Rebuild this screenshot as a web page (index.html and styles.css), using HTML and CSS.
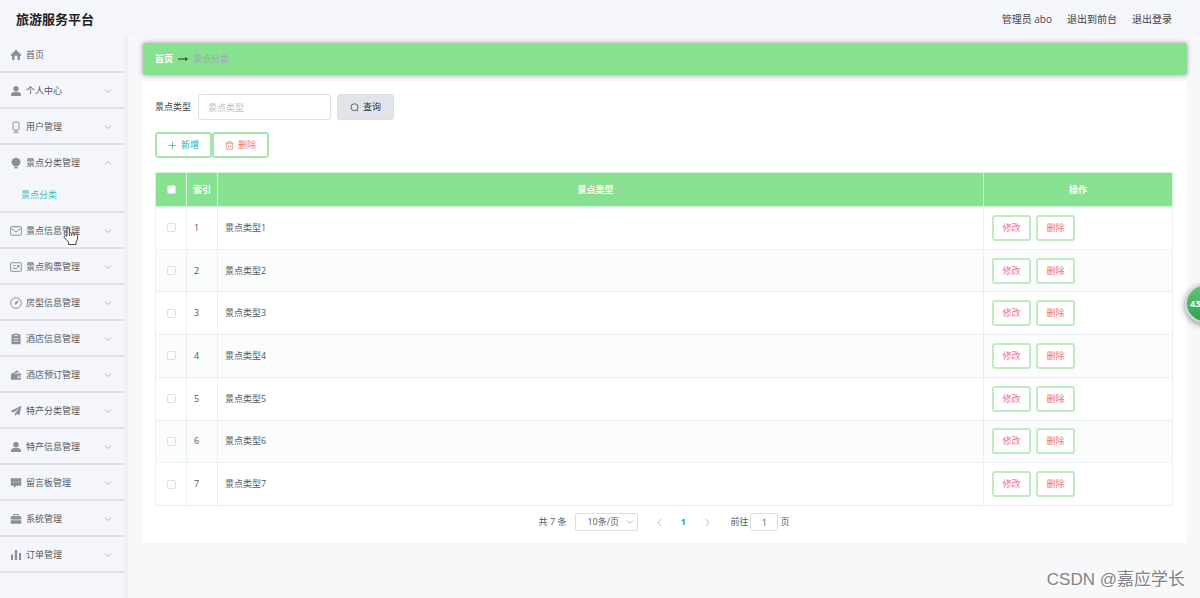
FILE: index.html
```html
<!DOCTYPE html>
<html lang="zh-CN">
<head>
<meta charset="utf-8">
<title>旅游服务平台</title>
<link rel="stylesheet" href="styles.css">
</head>
<body>
<svg class="defs" aria-hidden="true">
  <symbol id="down" viewBox="0 0 8 8"><path d="M1 2.500 4 5.500 7 2.500" fill="none" stroke="currentColor"/></symbol>
  <symbol id="user" viewBox="0 0 12 12"><circle cx="6" cy="3.700" r="2.700"/><path d="M1 11V9.300Q1 7.500 4 7h4q3 .5 3 2.300V11z"/></symbol>
</svg>
<header class="topbar">
  <h1 class="brand">旅游服务平台</h1>
  <nav class="account"><span>管理员 abo</span><a href="#">退出到前台</a><a href="#">退出登录</a></nav>
</header>
<div class="shell">
  <nav class="sidebar">
    <ul class="menu">
      <li><a class="item" href="#"><svg class="icon" viewBox="0 0 12 12"><path d="M6 .8.8 5.800V7H2v4h2.500V8a1.500 1.500 0 0 1 3 0v3H10V7h1.200V5.800z"/></svg><span>首页</span></a></li>
      <li><a class="item" href="#"><svg class="icon"><use href="#user"/></svg><span>个人中心</span><svg class="arrow"><use href="#down"/></svg></a></li>
      <li><a class="item" href="#"><svg class="icon line" viewBox="0 0 12 12"><rect x="3" y="1" width="6" height="8" rx="1"/><path d="M6 9v2M3.500 11.300h5"/></svg><span>用户管理</span><svg class="arrow"><use href="#down"/></svg></a></li>
      <li><a class="item" href="#"><svg class="icon" viewBox="0 0 12 12"><path d="M6 .8a4.500 4.500 0 0 1 4.500 4.500C10.500 7.500 8.500 8 8 9.500H4C3.500 8 1.500 7.500 1.500 5.300A4.500 4.500 0 0 1 6 .8zM4.500 10h3v1.500h-3z"/></svg><span>景点分类管理</span><svg class="arrow up"><use href="#down"/></svg></a>
        <a class="sub" href="#">景点分类</a></li>
      <li><a class="item" href="#"><svg class="icon line" viewBox="0 0 12 12"><rect x=".7" y="1.700" width="10.600" height="8.600" rx="1"/><path d="M1.500 3.500 6 7l4.500-3.500"/></svg><span>景点信息管理</span><svg class="arrow"><use href="#down"/></svg></a></li>
      <li><a class="item" href="#"><svg class="icon line" viewBox="0 0 12 12"><rect x=".7" y="1.700" width="10.600" height="8.600" rx="1"/><path d="M3 4.700h2.500M3 7.500h4M7.500 4.500H9v1.500H7.500z"/></svg><span>景点购票管理</span><svg class="arrow"><use href="#down"/></svg></a></li>
      <li><a class="item" href="#"><svg class="icon line" viewBox="0 0 12 12"><circle cx="6" cy="6" r="5.300"/><path d="M8.500 3.200 6.700 6.800 5 7.500 5.400 5.600z" fill="currentColor" stroke-width=".5"/></svg><span>房型信息管理</span><svg class="arrow"><use href="#down"/></svg></a></li>
      <li><a class="item" href="#"><svg class="icon" viewBox="0 0 12 12"><path d="M1.500 1.500h2V.7h5v.8h2v9.800h-9z"/><path class="cut" d="M4 2.600h4M3.500 5.500h5M3.500 8h5"/></svg><span>酒店信息管理</span><svg class="arrow"><use href="#down"/></svg></a></li>
      <li><a class="item" href="#"><svg class="icon" viewBox="0 0 12 12"><path d="M1 4.500h1.500L7.500 1l2 3.500H11v6.300H1z"/><path class="cut" d="M4.500 4.500h4L7.200 2.500M11 7H8v1.700h3"/></svg><span>酒店预订管理</span><svg class="arrow"><use href="#down"/></svg></a></li>
      <li><a class="item" href="#"><svg class="icon" viewBox="0 0 12 12"><path d="M11.500.8.500 6l3 1.500L9.500 3 5 8.200v3L6.700 9l2.600 1.300z"/></svg><span>特产分类管理</span><svg class="arrow"><use href="#down"/></svg></a></li>
      <li><a class="item" href="#"><svg class="icon"><use href="#user"/></svg><span>特产信息管理</span><svg class="arrow"><use href="#down"/></svg></a></li>
      <li><a class="item" href="#"><svg class="icon" viewBox="0 0 12 12"><path d="M.8 1.200h10.400v7.600H6.500L4 11V8.800H.8z"/><path class="cut" d="M3 5h1M5.500 5h1M8 5h1"/></svg><span>留言板管理</span><svg class="arrow"><use href="#down"/></svg></a></li>
      <li><a class="item" href="#"><svg class="icon" viewBox="0 0 12 12"><path d="M.8 3.200H3.500V1h5v2.200h2.700V6.500H.8zM4.500 2v1.200h3V2zM.8 7.300h10.400v3.500H.8z" fill-rule="evenodd"/></svg><span>系统管理</span><svg class="arrow"><use href="#down"/></svg></a></li>
      <li><a class="item" href="#"><svg class="icon" viewBox="0 0 12 12"><path d="M1 5.500h2V11H1zM4.800 1h2.300v10H4.800zM9 4h2v7H9z"/></svg><span>订单管理</span><svg class="arrow"><use href="#down"/></svg></a></li>
    </ul>
  </nav>
  <main class="main">
    <nav class="crumbs"><a href="#">首页</a><svg class="to" viewBox="0 0 10 6"><path d="M0 3h9M7 1.500 9.500 3 7 4.500" fill="none" stroke="currentColor"/></svg><span>景点分类</span></nav>
    <section class="card">
      <form class="search">
        <label for="type">景点类型</label>
        <input class="field" id="type" type="text" placeholder="景点类型">
        <button class="query" type="button"><svg viewBox="0 0 10 10"><circle cx="5" cy="4.700" r="3.900"/><path d="m7.500 8 1.500 1.200"/></svg>查询</button>
      </form>
      <div class="tools">
        <button class="btn add" type="button"><svg viewBox="0 0 10 10"><path d="M5 1v8M1 5h8"/></svg>新增</button>
        <button class="btn del" type="button"><svg viewBox="0 0 10 10"><path d="M.8 2.500h8.400M3.200 2.300V.8h3.600v1.500M1.800 2.500v6.700h6.400V2.500M4 4.500v2.700M6 4.500v2.700"/></svg>删除</button>
      </div>
      <table class="grid">
        <colgroup><col class="c-check"><col class="c-index"><col><col class="c-ops"></colgroup>
        <thead><tr><th><input type="checkbox" aria-label="全选"></th><th>索引</th><th>景点类型<svg class="sort" viewBox="0 0 6 10"><path d="M3 1 5.500 4.500H.5zM3 9 .5 5.500h5z"/></svg></th><th>操作</th></tr></thead>
        <tbody>
          <tr><td><input type="checkbox" aria-label="选择 1"></td><td>1</td><td>景点类型1</td><td><div class="ops"><button class="btn edit" type="button">修改</button><button class="btn del" type="button">删除</button></div></td></tr>
          <tr><td><input type="checkbox" aria-label="选择 2"></td><td>2</td><td>景点类型2</td><td><div class="ops"><button class="btn edit" type="button">修改</button><button class="btn del" type="button">删除</button></div></td></tr>
          <tr><td><input type="checkbox" aria-label="选择 3"></td><td>3</td><td>景点类型3</td><td><div class="ops"><button class="btn edit" type="button">修改</button><button class="btn del" type="button">删除</button></div></td></tr>
          <tr><td><input type="checkbox" aria-label="选择 4"></td><td>4</td><td>景点类型4</td><td><div class="ops"><button class="btn edit" type="button">修改</button><button class="btn del" type="button">删除</button></div></td></tr>
          <tr><td><input type="checkbox" aria-label="选择 5"></td><td>5</td><td>景点类型5</td><td><div class="ops"><button class="btn edit" type="button">修改</button><button class="btn del" type="button">删除</button></div></td></tr>
          <tr><td><input type="checkbox" aria-label="选择 6"></td><td>6</td><td>景点类型6</td><td><div class="ops"><button class="btn edit" type="button">修改</button><button class="btn del" type="button">删除</button></div></td></tr>
          <tr><td><input type="checkbox" aria-label="选择 7"></td><td>7</td><td>景点类型7</td><td><div class="ops"><button class="btn edit" type="button">修改</button><button class="btn del" type="button">删除</button></div></td></tr>
        </tbody>
      </table>
      <div class="pager">
        <span>共 7 条</span>
        <span class="size"><select aria-label="每页条数"><option>10条/页</option></select><svg><use href="#down"/></svg></span>
        <div class="pages">
          <button type="button" aria-label="上一页"><svg class="prev"><use href="#down"/></svg></button>
          <button class="current" type="button">1</button>
          <button type="button" aria-label="下一页"><svg class="next"><use href="#down"/></svg></button>
        </div>
        <label class="jump">前往<input type="text" value="1">页</label>
      </div>
    </section>
  </main>
</div>
<svg class="cursor" viewBox="0 0 16 20" aria-hidden="true"><path d="M4 10V2.500q1.200-1.500 2.400 0V7q1.200-1 2.200.3 1.300-.8 2.200.5 1.500-.6 2.200.7.900-.2 1.500.8V13l-1.500 3v2.500H5.500V16L1.200 11.500q-.4-1.800 1.300-1.700z"/><path d="M6.400 7v3M8.700 7.500V10M11 8v2.200"/></svg>
<div class="badge">43</div>
<div class="mark">CSDN @嘉应学长</div>
</body>
</html>
```

FILE: styles.css
```css
* { box-sizing: border-box; }
body {
  margin: 0;
  min-height: 100vh;
  display: flex;
  flex-direction: column;
  overflow: hidden;
  position: relative;
  background: #f4f6fb;
  color: #55585e;
  font: 9px/16px "Open Sans", "Noto Sans CJK SC", sans-serif;
}
a { color: inherit; text-decoration: none; }
button, input, select { font: inherit; color: inherit; margin: 0; }
.defs { position: absolute; width: 0; height: 0; }

.topbar {
  height: 37px;
  display: flex;
  align-items: center;
  justify-content: space-between;
  padding: 0 28px 0 16px;
}
.brand { margin: 0; font-size: 13px; color: #222; }
.account { display: flex; gap: 15px; font-size: 10px; color: #444; }

.shell { flex: 1; display: flex; }
.sidebar { flex: 0 0 128px; border-right: 4px solid #f1f1f2; }
.menu { list-style: none; margin: 0; padding: 0; }
.menu li { border-bottom: 2px solid #dfe1e6; }
.item { height: 34px; display: flex; align-items: center; padding: 2px 12px 0 10px; }
.icon { width: 12px; height: 12px; margin-right: 4px; fill: #8b8f96; color: #8b8f96; }
.icon.line { fill: none; stroke: #8b8f96; }
.cut { fill: none; stroke: #f4f6fb; stroke-width: 0.8; }
.arrow { width: 8px; height: 8px; margin-left: auto; color: #b6b9c0; }
.up { transform: rotate(180deg); }
.sub { display: block; padding: 8px 21px; color: #42bfc0; }

.main { flex: 1; min-width: 0; padding: 6px 13px 0 15px; background: #f7f8fa; }
.crumbs {
  height: 32px;
  display: flex;
  align-items: center;
  gap: 5px;
  padding: 0 12px;
  margin-bottom: 6px;
  border-radius: 2px;
  background: #88e190;
  box-shadow: 0 0 5px #999ba8;
  color: #99a9b2;
}
.crumbs a { color: #fff; font-weight: bold; }
.to { width: 10px; height: 6px; color: #333; }

.card { background: #fff; padding: 13px 14px 12px 12px; }
.search { display: flex; align-items: center; color: #444; }
.field {
  width: 133px;
  height: 26px;
  margin: 0 6px 0 7px;
  padding: 0 9px;
  border: 1px solid #dde0e7;
  border-radius: 3px;
  background: #fff;
}
.field::placeholder { color: #bcbfc7; }
button { display: flex; align-items: center; justify-content: center; gap: 4px; padding: 0; border: 0; background: none; }
button svg { width: 9px; height: 9px; fill: none; stroke: currentColor; stroke-width: 0.8; }
.query { width: 57px; height: 26px; border: 1px solid #dadfe4; border-radius: 3px; background: #e1e5e9; color: #333; }
.tools { display: flex; margin: 12px 0 14px; }
.btn { height: 26px; width: 39px; border: 2px solid #bfebc2; border-radius: 3px; background: #fff; }
.tools .btn { width: 57px; border-color: #a5e5aa; }
.add { color: #27adb0; }
.del { color: #ed7469; }
.edit { color: #ec7398; }

.grid { width: 100%; height: 334px; table-layout: fixed; border-collapse: collapse; }
.c-check, .c-index { width: 31px; }
.c-ops { width: 189px; }
.grid th { height: 34px; padding: 0; background: #88e190; border: 1px solid #d5f2dc; color: #fff; text-align: center; }
.grid td { padding: 0 7px; border: 1px solid #ebeef5; }
.grid td:last-child { padding: 0 8px; }
.grid td:first-child { padding: 0; text-align: center; }
.grid tbody tr:nth-child(even) { background: #fafdfc; }
.grid input {
  appearance: none;
  display: block;
  width: 9px;
  height: 9px;
  margin: 0 auto;
  border: 1px solid #dcdfe6;
  border-radius: 2px;
  background: #fff;
}
.sort { width: 6px; height: 9px; margin-left: 4px; fill: #b4b8cc; vertical-align: middle; }
.ops { display: flex; gap: 5px; }

.pager { display: flex; align-items: center; justify-content: center; margin-top: 7px; }
.size { display: flex; position: relative; margin: 0 9px; }
.size select { appearance: none; width: 63px; height: 18px; padding: 0 11px; border: 1px solid #dcdfe6; border-radius: 2px; background: #fff; }
.size svg { position: absolute; right: 4px; top: 5px; width: 8px; height: 8px; color: #b6b9c0; pointer-events: none; }
.pages { display: flex; margin-right: 11px; }
.pages button { width: 24px; height: 18px; color: #aaaeb6; }
.pages .current { color: #18aa91; font-weight: bold; }
.prev { transform: rotate(90deg); }
.next { transform: rotate(-90deg); }
.jump { display: flex; align-items: center; gap: 2px; }
.jump input { width: 28px; height: 18px; padding: 0; border: 1px solid #dcdfe6; border-radius: 2px; background: #fff; text-align: center; }

.cursor { position: absolute; left: 63px; top: 226px; width: 16px; height: 20px; fill: #fff; stroke: #444; }
.badge {
  position: absolute;
  right: -24px;
  top: 284px;
  width: 39px;
  height: 39px;
  padding-left: 3px;
  border: 2px solid #d0d4d5;
  border-radius: 50%;
  background: linear-gradient(#5fc679, #2fa052);
  box-shadow: 0 2px 6px #8a8d91;
  color: #fff;
  font-weight: bold;
  line-height: 35px;
}
.mark { position: absolute; right: 15px; bottom: 6px; font: 17px/24px "Liberation Sans", "Noto Sans CJK SC", sans-serif; color: #808389; text-shadow: 1px 1px #fff; }
```
